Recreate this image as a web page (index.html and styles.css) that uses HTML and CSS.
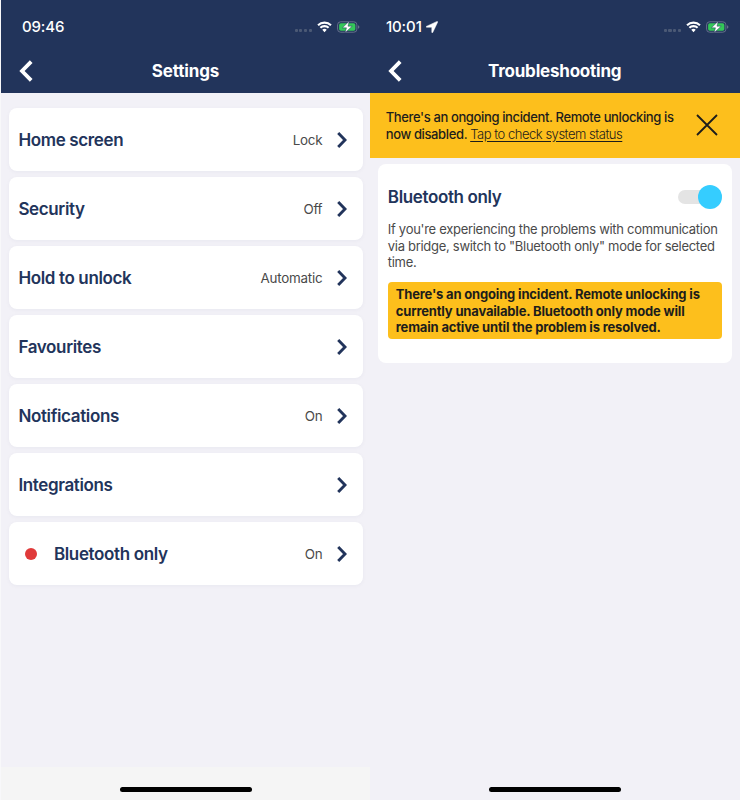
FILE: index.html
```html
<!DOCTYPE html>
<html lang="en">
<head>
<meta charset="utf-8">
<title>Settings</title>
<link rel="stylesheet" href="styles.css">
</head>
<body>
<svg width="0" height="0" class="defs" aria-hidden="true">
  <symbol id="back" viewBox="0 0 14 22"><path d="M12.2 1.6 3 11 12.2 20.4" fill="none" stroke="#fff" stroke-width="3.8"/></symbol>
  <symbol id="next" viewBox="0 0 10 16"><path d="M1.2 1.1 8 8 1.2 14.9" fill="none" stroke="#22345b" stroke-width="2.9"/></symbol>
  <symbol id="wifi" viewBox="0 0 16 12">
    <g fill="none" stroke="#fff" stroke-width="2.2"><path d="M1.1 4.2a9.8 9.8 0 0 1 13.8 0"/><path d="M3.6 6.9a6.2 6.2 0 0 1 8.8 0"/></g>
    <path d="M5.6 9a3.4 3.4 0 0 1 4.8 0L8 11.5Z" fill="#fff"/>
  </symbol>
  <symbol id="battery" viewBox="0 0 24 12">
    <rect x=".6" y=".6" width="20" height="10.8" rx="3.2" fill="none" stroke="#66728c"/>
    <rect x="2.2" y="2.2" width="16.8" height="7.6" rx="1.8" fill="#34c759"/>
    <path d="M22 4.2c1.5.7 1.5 2.9 0 3.6Z" fill="#7b869d"/>
    <path d="M12.6 0 5.6 6.9h4.2L8.4 12 15.7 5.1h-4.3Z" fill="#fff" stroke="#22345b" stroke-width=".5"/>
  </symbol>
</svg>
<main class="screens">
  <section class="screen">
    <header class="header">
      <div class="status"><span class="time">09:46</span>
        <div class="signals"><span class="dots"><i></i><i></i><i></i><i></i></span><svg class="wifi"><use href="#wifi"/></svg><svg class="battery"><use href="#battery"/></svg></div>
      </div>
      <div class="nav"><svg class="back"><use href="#back"/></svg><h1>Settings</h1></div>
    </header>
    <div class="list">
      <div class="row"><span class="label">Home screen</span><span class="value">Lock</span><svg class="next"><use href="#next"/></svg></div>
      <div class="row"><span class="label">Security</span><span class="value">Off</span><svg class="next"><use href="#next"/></svg></div>
      <div class="row"><span class="label">Hold to unlock</span><span class="value">Automatic</span><svg class="next"><use href="#next"/></svg></div>
      <div class="row"><span class="label">Favourites</span><svg class="next"><use href="#next"/></svg></div>
      <div class="row"><span class="label">Notifications</span><span class="value">On</span><svg class="next"><use href="#next"/></svg></div>
      <div class="row"><span class="label">Integrations</span><svg class="next"><use href="#next"/></svg></div>
      <div class="row"><span class="alert"></span><span class="label">Bluetooth only</span><span class="value">On</span><svg class="next"><use href="#next"/></svg></div>
    </div>
    <footer class="footer footer-grey"><span class="home"></span></footer>
  </section>
  <section class="screen">
    <header class="header">
      <div class="status"><span class="time">10:01</span><svg class="location" viewBox="0 0 12 12"><path d="M11.1.4.3 5.4q-.6.6.3.8h5.2v5.1q.3.9.9.2L11.7 1.1q.1-.7-.6-.7Z" fill="#fff" stroke="#fff" stroke-width=".5"/></svg>
        <div class="signals"><span class="dots"><i></i><i></i><i></i><i></i></span><svg class="wifi"><use href="#wifi"/></svg><svg class="battery"><use href="#battery"/></svg></div>
      </div>
      <div class="nav"><svg class="back"><use href="#back"/></svg><h1>Troubleshooting</h1></div>
    </header>
    <div class="banner">
      <p>There's an ongoing incident. Remote unlocking is<br>now disabled. <a>Tap to check system status</a></p>
      <svg class="close" viewBox="0 0 22 22"><path d="m1 1 20 20M21 1 1 21" stroke="#1d1d1b" stroke-width="1.8"/></svg>
    </div>
    <div class="card">
      <div class="card-head"><span class="label">Bluetooth only</span><span class="toggle"><span class="knob"></span></span></div>
      <p class="desc">If you're experiencing the problems with communication<br>via bridge, switch to "Bluetooth only" mode for selected<br>time.</p>
      <p class="notice">There's an ongoing incident. Remote unlocking is<br>currently unavailable. Bluetooth only mode will<br>remain active until the problem is resolved.</p>
    </div>
    <footer class="footer"><span class="home"></span></footer>
  </section>
</main>
</body>
</html>
```
FILE: styles.css
```css
* { box-sizing: border-box; }
body { margin: 0; background: #f8f8fa; font-family: Inter, "Liberation Sans", sans-serif; }
p, h1 { margin: 0; white-space: nowrap; }
svg { display: block; flex: none; }
.defs { position: absolute; }
.screens { display: grid; grid-template-columns: 369.4px 369.2px; width: 740px; height: 800px; padding-left: 1px; }
.screen { display: flex; flex-direction: column; height: 800px; background: #f2f1f7; }
.header { height: 92.6px; flex: none; background: #22345b; color: #fff; }
.status { display: flex; align-items: center; height: 54px; padding: 0 10.5px 0 21px; }
.screen + .screen .status { padding-left: 15.5px; }
.time { font-size: 15px; font-weight: 550; letter-spacing: -.15px; line-height: 18px; }
.screen + .screen .time { letter-spacing: -.1px; }
.location { width: 12px; height: 12px; margin-left: 4px; }
.signals { display: flex; align-items: center; margin-left: auto; }
.dots { display: flex; gap: 1.6px; margin: 7px 5px 0 0; }
.dots i { width: 3.1px; height: 3px; border-radius: 1px; background: #4b5975; }
.wifi { width: 15px; height: 12px; margin-right: 5px; }
.battery { width: 23.2px; height: 12px; }
.nav { display: grid; grid-template-columns: 19px 1fr 19px; align-items: center; height: 34px; padding: 0 18.5px 0 18px; }
.back { width: 14px; height: 22px; }
h1 { font-size: 17px; font-weight: 650; line-height: 22px; letter-spacing: -.14px; text-align: center; }
.screen + .screen h1 { letter-spacing: -.21px; }
.list { display: flex; flex-direction: column; gap: 5.8px; padding: 15.6px 7.9px 0; }
.row { display: flex; align-items: center; height: 63.2px; padding: 0 15.4px 0 9.5px; border-radius: 8px; background: #fff; box-shadow: 0 1px 4px #22345b0b; }
.label { color: #22345b; font-size: 17px; font-weight: 580; letter-spacing: -.36px; line-height: 22px; }
.value { margin-left: auto; margin-right: 14.8px; color: #4a4a4a; font-size: 13.4px; letter-spacing: -.24px; line-height: 18px; }
.next { width: 10px; height: 16px; }
.label + .next { margin-left: auto; }
.alert { width: 12px; height: 12px; margin: 0 16.5px 0 7px; border-radius: 50%; background: #e03a3a; }
.footer { display: flex; justify-content: center; align-items: flex-end; height: 33.5px; margin-top: auto; padding-bottom: 7.7px; }
.footer-grey { background: #f5f5f5; }
.home { width: 132px; height: 5px; border-radius: 3px; background: #000; }
.banner { display: flex; justify-content: space-between; align-items: center; height: 65px; flex: none; padding: 2px 21.5px 0 15.3px; background: #fdbf1c; color: #1d1d1b; font-size: 13px; font-weight: 500; letter-spacing: -.37px; line-height: 17px; }
.banner a { font-weight: 300; letter-spacing: -.47px; text-decoration: underline; text-underline-offset: 2px; }
.close { width: 22px; height: 22px; margin-top: -2px; }
.card { height: 199px; margin: 6px 7.4px 0 7.6px; padding: 18px 10px 0 9.8px; border-radius: 8px; background: #fff; }
.card-head { display: flex; justify-content: space-between; align-items: center; height: 31px; }
.toggle { display: flex; justify-content: flex-end; align-items: center; width: 44px; height: 14px; border-radius: 7px; background: #e4e4e4; }
.knob { width: 24px; height: 24px; flex: none; border-radius: 50%; background: #35cdff; }
.desc { margin-top: 8.5px; color: #4a4a4a; font-size: 13px; letter-spacing: -.29px; line-height: 16.5px; }
.notice { height: 57.4px; margin-top: 11px; padding: 4.5px 8px; border-radius: 4px; background: #fdbf1c; color: #1d1d1b; font-size: 13px; font-weight: 700; letter-spacing: -.17px; line-height: 16.5px; }
```
